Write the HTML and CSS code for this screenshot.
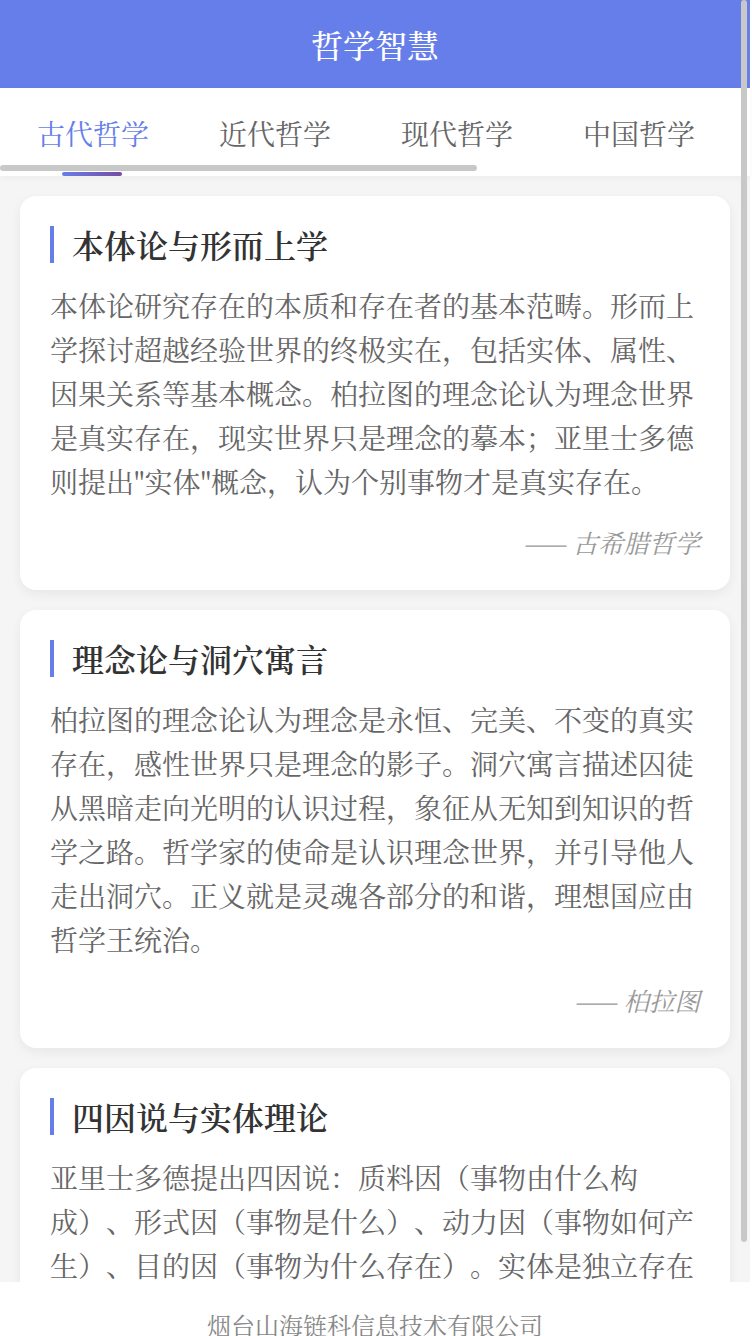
FILE: index.html
```html
<!DOCTYPE html>
<html>
<head>
<meta charset="utf-8">
<title>哲学智慧</title>
<link rel="stylesheet" href="styles.css">
</head>
<body>
<div class="app">
  <header class="header"><h1 class="header-title">哲学智慧</h1></header>
  <nav class="tabs">
    <div class="tab-track">
      <span class="tab active">古代哲学</span>
      <span class="tab">近代哲学</span>
      <span class="tab">现代哲学</span>
      <span class="tab">中国哲学</span>
      <span class="tab">印度哲学</span>
      <span class="tab">伊斯兰哲学</span>
    </div>
    <div class="hscroll-thumb" aria-hidden="true"></div>
  </nav>
  <main class="content">
    <article class="card">
      <h2 class="card-title">本体论与形而上学</h2>
      <p class="card-text">本体论研究存在的本质和存在者的基本范畴。形而上学探讨超越经验世界的终极实在，包括实体、属性、因果关系等基本概念。柏拉图的理念论认为理念世界是真实存在，现实世界只是理念的摹本；亚里士多德则提出"实体"概念，认为个别事物才是真实存在。</p>
      <div class="card-author">—— 古希腊哲学</div>
    </article>
    <article class="card">
      <h2 class="card-title">理念论与洞穴寓言</h2>
      <p class="card-text">柏拉图的理念论认为理念是永恒、完美、不变的真实存在，感性世界只是理念的影子。洞穴寓言描述囚徒从黑暗走向光明的认识过程，象征从无知到知识的哲学之路。哲学家的使命是认识理念世界，并引导他人走出洞穴。正义就是灵魂各部分的和谐，理想国应由哲学王统治。</p>
      <div class="card-author">—— 柏拉图</div>
    </article>
    <article class="card">
      <h2 class="card-title">四因说与实体理论</h2>
      <p class="card-text">亚里士多德提出四因说：质料因（事物由什么构成）、形式因（事物是什么）、动力因（事物如何产生）、目的因（事物为什么存在）。实体是独立存在的个别事物，由质料和形式结合而成，潜能向现实的转化构成了事物的运动与变化。</p>
      <div class="card-author">—— 亚里士多德</div>
    </article>
  </main>
  <footer class="footer">
    <p class="footer-text">烟台山海链科信息技术有限公司</p>
  </footer>
</div>
<div class="vscroll-thumb" aria-hidden="true"></div>
</body>
</html>
```
FILE: styles.css
```css
html, body {
  margin: 0;
  padding: 0;
}
body {
  background: #ffffff;
  font-family: "Noto Serif CJK SC", "Source Han Serif SC", "AR PL UMing CN", "Liberation Serif", serif;
  text-spacing-trim: space-all;
}
.app {
  width: 750px;
  background: #f5f5f5;
}
.header {
  height: 88px;
  background: #667eea;
  display: flex;
  align-items: center;
  justify-content: center;
}
.header-title {
  margin: 0;
  font-size: 32px;
  font-weight: 500;
  color: #ffffff;
  line-height: 1;
}
.tabs {
  height: 88px;
  background: #ffffff;
  overflow-x: auto;
  overflow-y: hidden;
  box-shadow: 0 2px 8px rgba(0, 0, 0, 0.04);
  position: relative;
  z-index: 1;
}
.tab-track {
  display: flex;
  width: max-content;
  padding: 0 84px 0 2px;
}
.tab {
  position: relative;
  flex: none;
  padding: 0 35px;
  height: 88px;
  line-height: 90px;
  font-size: 28px;
  color: #666666;
  white-space: nowrap;
}
.tab.active {
  color: #667eea;
}
.tab.active::after {
  content: "";
  position: absolute;
  left: 50%;
  bottom: 0;
  width: 60px;
  height: 4px;
  margin-left: -31px;
  border-radius: 2px;
  background: linear-gradient(90deg, #667eea, #764ba2);
}
.hscroll-thumb {
  position: absolute;
  left: 0;
  bottom: 5px;
  width: 477px;
  height: 6px;
  border-radius: 3px;
  background: #c8c8c8;
}
.vscroll-thumb {
  position: fixed;
  top: 0;
  right: 5px;
  width: 6px;
  height: 1242px;
  border-radius: 3px;
  background: #c8c8c8;
  z-index: 10;
}
.content {
  height: calc(100vh - 230px);
  overflow: hidden;
  padding: 20px;
  box-sizing: border-box;
  display: flex;
  flex-direction: column;
  gap: 20px;
}
.card {
  flex: none;
  background: #ffffff;
  border-radius: 16px;
  padding: 30px;
  box-shadow: 0 4px 12px rgba(0, 0, 0, 0.06);
}
.card-title {
  margin: 0;
  padding-left: 18px;
  border-left: 4px solid #667eea;
  font-size: 32px;
  line-height: 37px;
  font-weight: 600;
  color: #333333;
}
.card-text {
  margin: 20px 0 0;
  font-size: 28px;
  line-height: 44px;
  color: #666666;
  word-break: break-all;
}
.card-author {
  margin-top: 21px;
  text-align: right;
  font-size: 25.5px;
  line-height: 36px;
  font-style: italic;
  color: #999999;
}
.footer {
  background: #ffffff;
  padding: 25px 20px 94px;
}
.footer-text {
  margin: 0;
  text-align: center;
  font-size: 24px;
  line-height: 36px;
  color: #888888;
}
```
